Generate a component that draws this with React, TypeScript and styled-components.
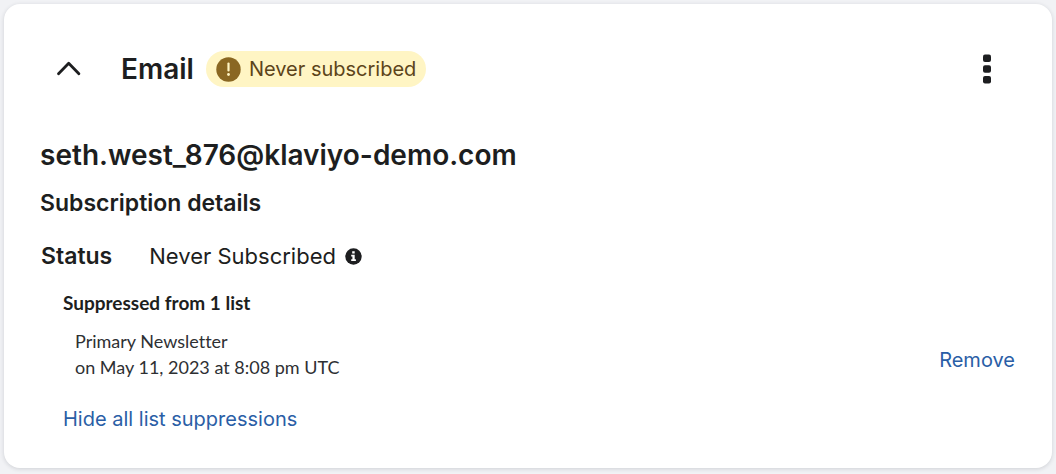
import React, { useState } from "react";
import styled, { createGlobalStyle } from "styled-components";

const GlobalStyle = createGlobalStyle`
  *, *::before, *::after { box-sizing: border-box; }
  body {
    margin: 0;
    background: #f1f2f5;
    color: #1d1e20;
    font-family: Inter, "Liberation Sans", sans-serif;
  }
  button { font: inherit; color: inherit; background: none; border: 0; padding: 0; cursor: pointer; }
  h2, h3, h4, p, dl, dt, dd { margin: 0; }
`;

const Page = styled.main`
  padding: 4px 4px 6px;
`;

const Card = styled.section`
  padding: 47px 37px 35px 36px;
  border-radius: 16px;
  background: #fff;
  box-shadow: 0 1px 4px rgba(30, 36, 50, 0.16);
`;

const Header = styled.header`
  display: flex;
  align-items: center;
  height: 36px;
`;

const IconButton = styled.button<{ $width: number }>`
  display: flex;
  align-items: center;
  justify-content: center;
  width: ${(p) => p.$width}px;
  height: 36px;
`;

const Title = styled.h2`
  margin-left: 23px;
  font-size: 28px;
  line-height: 36px;
  font-weight: 600;
`;

const Badge = styled.span`
  display: flex;
  align-items: center;
  gap: 8px;
  height: 36px;
  margin: 0 auto 0 12px;
  padding: 0 10px;
  border-radius: 18px;
  background: #fff5c4;
  color: #5c441a;
  font-size: 20px;
`;

const Address = styled.h3`
  margin-top: 50px;
  font-size: 28px;
  line-height: 36px;
  font-weight: 600;
`;

const SectionTitle = styled.h4`
  margin-top: 16px;
  font-size: 23px;
  line-height: 28px;
  font-weight: 600;
`;

const StatusRow = styled.dl`
  display: flex;
  align-items: center;
  gap: 37px;
  margin-top: 23px;
  padding-left: 1px;
  font-size: 22px;
  line-height: 32px;

  dt { font-size: 23px; font-weight: 600; }
  dd { display: flex; align-items: center; gap: 9px; }
`;

const InfoButton = styled.button`
  display: flex;
`;

const Suppressions = styled.div`
  margin-top: 18px;
  padding-left: 23px;
`;

const SuppressionTitle = styled.p`
  font-family: Lato, Inter, sans-serif;
  font-size: 19px;
  line-height: 26px;
  font-weight: 700;
`;

const SuppressionItem = styled.div`
  display: flex;
  align-items: flex-end;
  justify-content: space-between;
  margin-top: 12px;
  padding-left: 12px;
`;

const SuppressionText = styled.p`
  color: #2e3033;
  font-family: Lato, Inter, sans-serif;
  font-size: 18px;
  line-height: 26px;
  font-variant-ligatures: none;
`;

const LinkButton = styled.button<{ $gap?: "top" | "bottom" }>`
  display: block;
  margin-top: ${(p) => (p.$gap === "top" ? 25 : 0)}px;
  margin-bottom: ${(p) => (p.$gap === "bottom" ? 6 : 0)}px;
  color: #2a5ea6;
  font-size: 20px;
  line-height: 28px;
`;

export default function App() {
  const [open, setOpen] = useState(true);
  return (
    <>
      <GlobalStyle />
      <Page>
        <Card>
          <Header>
            <IconButton $width={58} aria-label="Toggle email details" aria-expanded={open} onClick={() => setOpen(!open)}>
              <svg width="26" height="16" viewBox="0 0 26 16" fill="none" stroke="#1d1e20" strokeWidth="2.8" strokeLinecap="round" strokeLinejoin="round">
                <path d="M2.500 12.800 12.700 2.300l10.200 10.500" />
              </svg>
            </IconButton>
            <Title>Email</Title>
            <Badge>
              <svg width="25" height="25" viewBox="0 0 25 25" aria-hidden="true">
                <circle cx="12.500" cy="12.500" r="12.200" fill="#8a6722" />
                <path d="M12.500 6.500v7" stroke="#fff5c4" strokeWidth="2.200" strokeLinecap="round" />
                <circle cx="12.500" cy="17.500" r="1.400" fill="#fff5c4" />
              </svg>
              Never subscribed
            </Badge>
            <IconButton $width={56} aria-label="More actions">
              <svg width="8" height="30" viewBox="0 0 8 30" fill="#1d1e20">
                <rect y="0.500" width="8" height="7.600" rx="2" />
                <rect y="11.200" width="8" height="7.600" rx="2" />
                <rect y="21.900" width="8" height="7.600" rx="2" />
              </svg>
            </IconButton>
          </Header>
          {open && (
            <>
              <Address>seth.west_876@klaviyo-demo.com</Address>
              <SectionTitle>Subscription details</SectionTitle>
              <StatusRow>
                <dt>Status</dt>
                <dd>
                  Never Subscribed
                  <InfoButton aria-label="About this status">
                    <svg width="17" height="17" viewBox="0 0 17 17">
                      <circle cx="8.500" cy="8.500" r="8.200" fill="#1d1e20" />
                      <path d="M7.200 3.200h2.500v2.200H7.200zM6.200 6.700h3.500v4.600h1.200v1.700H6.200v-1.700h1.200V8.400H6.200z" fill="#fff" />
                    </svg>
                  </InfoButton>
                </dd>
              </StatusRow>
              <Suppressions>
                <SuppressionTitle>Suppressed from 1 list</SuppressionTitle>
                <SuppressionItem>
                  <SuppressionText>
                    Primary Newsletter
                    <br />
                    on May 11, 2023 at 8:08 pm UTC
                  </SuppressionText>
                  <LinkButton $gap="bottom">Remove</LinkButton>
                </SuppressionItem>
                <LinkButton $gap="top">Hide all list suppressions</LinkButton>
              </Suppressions>
            </>
          )}
        </Card>
      </Page>
    </>
  );
}
